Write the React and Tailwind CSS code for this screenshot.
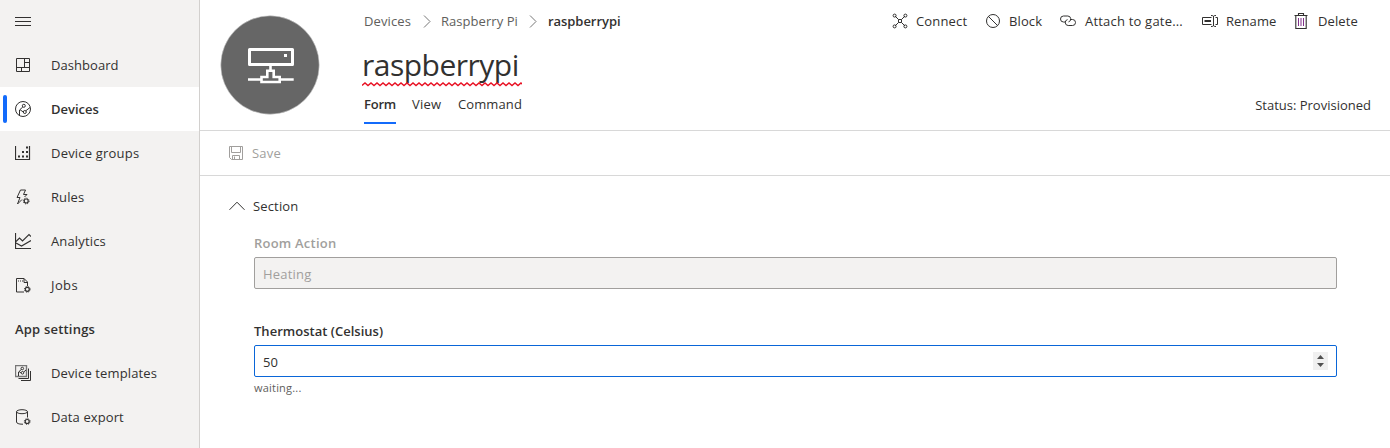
import React from "react";

function Icon({ children, className = "", size = 16, sw = 1 }) {
  return (
    <svg
      width={size}
      height={size}
      viewBox={`0 0 ${size} ${size}`}
      fill="none"
      stroke="currentColor"
      strokeWidth={sw}
      className={`shrink-0 ${className}`}
    >
      {children}
    </svg>
  );
}

const gear = (cx, cy) => (
  <g>
    <circle cx={cx} cy={cy} r="2" strokeWidth="1.2" />
    <circle cx={cx} cy={cy} r="2.9" strokeWidth="1" strokeDasharray="1.1 1.18" />
  </g>
);

const icons = {
  menu: <path d="M0 3.5H16M0 7.5H16M0 11.5H16" />,
  dashboard: <path d="M1.5 1.5H14.5V14.5H1.5ZM9.5 1.5V10.5M1.5 10.5H14.5M6.5 10.5V14.5M9.5 5.5H14.5" />,
  devices: (
    <g>
      <circle cx="8" cy="8" r="7.5" />
      <circle cx="8.8" cy="4.8" r="1.5" />
      <circle cx="9.8" cy="11" r="1.5" />
      <path d="M4.5 14.5V9L7.8 6M10.8 9.8L15 6.5M8.3 11L5 8.7" />
    </g>
  ),
  groups: (
    <g>
      <path d="M0.5 1V14.5H14.5V1" strokeWidth="1.2" />
      <path d="M3 11.5H5M7 11.5H9M11 11.5H13M7 7H9M11 7H13M11 2.5H13" strokeWidth="2" />
    </g>
  ),
  rules: (
    <g>
      <path d="M5.5 1H10.5L8.5 5.5H12L9.5 8M5.5 1L2 8.5H5L2.5 15L7 10.5" />
      {gear(11.2, 12)}
    </g>
  ),
  analytics: (
    <g>
      <path d="M0.5 0V15.5H16" strokeWidth="1.2" />
      <path d="M1 8.5L4.5 5L7.5 8L14 1.5L16 3.5M1 10L6.5 13L16 7.5" strokeWidth="1.1" />
    </g>
  ),
  jobs: (
    <g>
      <path d="M9 15H1.5V1.5H9L12.5 5V9M9 1.5V5.5H12.5" />
      <path d="M3 4H8" strokeDasharray="1 1" />
      {gear(12.3, 12.3)}
    </g>
  ),
  templates: (
    <g>
      <path d="M0.5 0.5H11.5V11.5H0.5Z" stroke="#777" strokeWidth="1.4" />
      <circle cx="7.3" cy="3.5" r="1.3" />
      <circle cx="7.5" cy="7.8" r="1.3" />
      <path d="M3.5 11V7L6.3 4.5M8.7 7L11 5M6 8L4 6.5M3.5 13.5H13.5V3.5M6 15.5H15.5V6" />
    </g>
  ),
  data: (
    <g>
      <ellipse cx="7" cy="2.7" rx="5.5" ry="2" />
      <path d="M1.5 2.7V13C1.5 14.3 4 15.2 7 15.2H8M12.5 2.7V8.5" />
      {gear(12.2, 12.5)}
    </g>
  ),
  connect: (
    <g>
      <path d="M6.5 6.5H9.5V9.5H6.5ZM3 3L6.5 6.5M13 3L9.5 6.5M3 13L6.5 9.5M13 13L9.5 9.5" />
      <circle cx="2.6" cy="2.6" r="1.5" />
      <circle cx="13.4" cy="2.6" r="1.5" />
      <circle cx="2.6" cy="13.4" r="1.5" />
      <circle cx="13.4" cy="13.4" r="1.5" />
    </g>
  ),
  block: (
    <g>
      <circle cx="8" cy="8" r="6.5" />
      <path d="M3.4 3.4L12.6 12.6" />
    </g>
  ),
  attach: (
    <g>
      <path d="M5.5 9H3.5A3 3 0 0 1 3.5 3H7.8A3 3 0 0 1 8.5 8.9" />
      <path d="M10.5 6.5H12.5A3 3 0 0 1 12.5 12.5H8.2A3 3 0 0 1 7.5 6.6" />
    </g>
  ),
  rename: (
    <g>
      <path d="M9.5 4.5H0.5V11.5H9.5M13.5 4.5H15.5V11.5H13.5" />
      <path d="M2.5 8H9" strokeWidth="2" />
      <path d="M11.5 3V13M9 2.5C10.5 2.5 11.5 2.8 11.5 3.5C11.5 2.8 12.5 2.5 14 2.5M9 13.5C10.5 13.5 11.5 13.2 11.5 12.5C11.5 13.2 12.5 13.5 14 13.5" />
    </g>
  ),
  trash: (
    <g>
      <path d="M1.5 2.5H14.5M5.5 2.5V0.5H10.5V2.5M2.8 2.5V15.5H13.2V2.5" strokeWidth="1.1" />
      <path d="M5.5 5V13M8 5V13M10.5 5V13" stroke="#80308a" />
    </g>
  ),
  save: (
    <path d="M1.5 1.5H14.5V14.5H3.5L1.5 12.5ZM3.5 1.5V7.5H12.5V1.5M4.5 14.5V10.5H11.5V14.5M6.5 11.5V14.5" />
  ),
};

const navTop = [
  ["Dashboard", "dashboard", "tracking-[0.05px]"],
  ["Devices", "devices", "font-semibold tracking-normal"],
  ["Device groups", "groups", "tracking-[0.2px]"],
  ["Rules", "rules", "tracking-[0.1px]"],
  ["Analytics", "analytics", "tracking-[0.15px]"],
  ["Jobs", "jobs", "tracking-[0.4px]"],
];
const navBottom = [
  ["Device templates", "templates", "tracking-[0.13px]"],
  ["Data export", "data", "tracking-[0.1px]"],
];

function NavItem({ label, icon, tracking, active }) {
  return (
    <div className={`relative flex h-11 items-center pl-[15px] ${active ? "bg-white" : ""}`}>
      {active && <span className="absolute left-[3px] top-2 h-7 w-1 rounded-xs bg-[#136bfb]" />}
      <Icon>{icons[icon]}</Icon>
      <span className={`ml-5 ${tracking}`}>{label}</span>
    </div>
  );
}

function Action({ icon, label, className }) {
  return (
    <div className={`flex shrink-0 items-center gap-2 ${className}`}>
      <Icon>{icons[icon]}</Icon>
      <span>{label}</span>
    </div>
  );
}

const Chevron = () => (
  <svg width="8" height="13" viewBox="0 0 8 13" fill="none" stroke="#777" className="shrink-0">
    <path d="M1 0.5L7 6.5L1 12.5" />
  </svg>
);

const wave = "M0 3.5" + Array.from({ length: 27 }, (_, i) => `L${i * 6 + 3} 1L${i * 6 + 6} 3.5`).join("");

export default function App() {
  return (
    <div className="flex h-[448px] w-[1390px] overflow-hidden bg-white font-['Open_Sans','Noto_Sans',sans-serif] text-[13px] leading-5 text-[#323130]">
      <nav className="w-[200px] shrink-0 border-r border-[#d2d0ce] bg-[#f3f2f1]">
        <div className="flex h-[43px] items-center pl-[15px]">
          <Icon>{icons.menu}</Icon>
        </div>
        {navTop.map(([l, i, t]) => (
          <NavItem key={l} label={l} icon={i} tracking={t} active={l === "Devices"} />
        ))}
        <div className="flex h-11 items-center pl-[15px] font-semibold tracking-[0.2px]">App settings</div>
        {navBottom.map(([l, i, t]) => (
          <NavItem key={l} label={l} icon={i} tracking={t} />
        ))}
      </nav>

      <main className="flex min-w-0 flex-1 flex-col">
        <header className="flex h-[131px] border-b border-[#d8d8d8] pl-5">
          <svg width="100" height="100" viewBox="220 15 100 100" className="mt-[15px] shrink-0" fill="none">
            <circle cx="270" cy="65" r="49.2" fill="#666" stroke="#c8c8c8" strokeWidth="0.6" />
            <path d="M249.5 49.5H292.5V64.5H249.5Z" stroke="#fff" strokeWidth="3" strokeLinejoin="round" />
            <path d="M284 54H287V57H284Z" fill="#fff" />
            <path
              d="M270.5 65V70M261.5 82V77H267.3V70.8H273.7V77H279.7V82ZM248 79.5H261M280 79.5H293.7"
              stroke="#fff"
              strokeWidth="2.6"
            />
          </svg>
          <div className="ml-11 flex min-w-0 flex-1 flex-col">
            <div className="flex h-[42px] items-center justify-between">
              <div className="flex items-center text-[#605e5c]">
                <span className="w-[59px] tracking-[0.1px]">Devices</span>
                <Chevron />
                <span className="ml-[10px] w-[88px] whitespace-nowrap tracking-[0.05px]">Raspberry Pi</span>
                <Chevron />
                <span className="ml-[11px] font-semibold tracking-[-0.05px] text-[#323130]">raspberrypi</span>
              </div>
              <div className="flex w-[498px] shrink-0 items-center whitespace-nowrap">
                <Action icon="connect" label="Connect" className="w-[93px] tracking-[0.15px]" />
                <Action icon="block" label="Block" className="w-[75px] tracking-[0.1px]" />
                <Action icon="attach" label="Attach to gate..." className="w-[142px] gap-[9px] tracking-[0.2px]" />
                <Action icon="rename" label="Rename" className="w-[91px] tracking-[0.1px]" />
                <Action icon="trash" label="Delete" className="gap-[9px] tracking-[0.1px]" />
              </div>
            </div>
            <div className="relative -ml-[3px] h-[46px] text-[30px] leading-[46px]">
              <span className="ml-px font-normal tracking-[-0.5px]">raspberrypi</span>
              <svg width="160" height="5" className="absolute left-px top-10" fill="none" stroke="#e81123" strokeWidth="1.4">
                <path d={wave} />
              </svg>
            </div>
            <div className="flex h-9 items-start pr-[19px]">
              <span className="mr-4 h-9 w-8 border-b-2 border-[#136bfb] pt-[6px] font-semibold tracking-[-0.2px]">Form</span>
              <span className="w-[46px] pt-[6px] tracking-[0.2px]">View</span>
              <span className="pt-[6px] tracking-[0.1px]">Command</span>
              <span className="ml-auto pt-[7px]">Status: Provisioned</span>
            </div>
          </div>
        </header>

        <div className="flex h-[45px] shrink-0 items-center gap-2 border-b border-[#d8d8d8] pl-7 text-[#a19f9d]">
          <Icon>{icons.save}</Icon>
          <span className="-mt-px tracking-[0.2px]">Save</span>
        </div>

        <section className="flex flex-col pl-[29px] pr-[53px] pt-5">
          <div className="flex h-5 items-center gap-2">
            <svg width="16" height="10" viewBox="0 0 16 10" fill="none" stroke="#323130">
              <path d="M0.5 8.8L8 1.2L15.5 8.8" />
            </svg>
            <span className="tracking-[0.15px]">Section</span>
          </div>
          <div className="flex flex-col pl-[25px] pt-[17px]">
            <label className="h-6 font-semibold tracking-[0.22px] text-[#a19f9d]">Room Action</label>
            <div className="flex h-8 items-center rounded-xs border border-[#a19f9d] bg-[#f3f2f1] px-2 pt-0.5 tracking-[0.2px] text-[#a19f9d]">
              Heating
            </div>
            <label className="mt-8 h-6 font-semibold tracking-[0.02px]">Thermostat (Celsius)</label>
            <div className="flex h-8 items-center justify-between rounded-xs border border-[#0a66d8] pl-2 pr-2">
              <span className="pt-0.5">50</span>
              <svg width="15" height="18" viewBox="0 0 15 18">
                <path fill="#f0f0f0" d="M0 0H15V18H0Z" />
                <path fill="#505050" d="M4 7L7.5 3L11 7ZM4 11L7.5 15L11 11Z" />
              </svg>
            </div>
            <div className="mt-px text-[11px] tracking-[0.2px] text-[#605e5c]">waiting...</div>
          </div>
        </section>
      </main>
    </div>
  );
}
